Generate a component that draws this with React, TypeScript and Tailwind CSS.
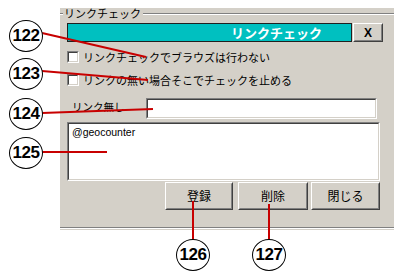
import React from "react";

const jp = { fontFamily: '"MS UI Gothic", "Noto Sans CJK JP", sans-serif' };

function Sunken({ className, children }: { className: string; children?: React.ReactNode }) {
  return (
    <div className={`border border-t-[#808080] border-l-[#808080] border-b-white border-r-white ${className}`}>
      <div className="w-full h-full border border-t-[#404040] border-l-[#404040] border-b-[#d4d0c8] border-r-[#d4d0c8] bg-white">
        {children}
      </div>
    </div>
  );
}

function Raised({ className, children }: { className: string; children?: React.ReactNode }) {
  return (
    <div className={`border border-t-white border-l-white border-b-[#404040] border-r-[#404040] ${className}`}>
      <div className="w-full h-full border border-t-[#d4d0c8] border-l-[#d4d0c8] border-b-[#808080] border-r-[#808080] bg-[#d4d0c8] flex items-center justify-center">
        {children}
      </div>
    </div>
  );
}

function Callout({ n, className }: { n: string; className: string }) {
  return (
    <div
      className={`absolute w-[34px] h-[32px] rounded-[50%] border border-black bg-white flex items-center justify-center text-[17px] font-bold tracking-[-0.5px] text-black ${className}`}
      style={{ fontFamily: '"Liberation Sans", Arial, sans-serif' }}
    >
      {n}
    </div>
  );
}

function CheckRow({ label, className }: { label: string; className: string }) {
  return (
    <div className={`flex items-center h-[12px] ${className}`}>
      <Sunken className="w-[12px] h-[12px]" />
      <span className="ml-[4px] text-[11px] leading-none text-black" style={jp}>
        {label}
      </span>
    </div>
  );
}

export default function App() {
  return (
    <div className="relative w-[401px] h-[275px] bg-white overflow-hidden">
      <div className="ml-[60px] pt-[8px]">
        <div className="w-[334px] h-[222px] bg-[#d4d0c8] flex flex-col pl-[7px]">
          <div className="-ml-[7px] h-[11px] flex items-center">
            <div className="w-[3px] border-t border-t-[#808080] border-b border-b-white" />
            <span className="ml-[1px] text-[11px] leading-none text-black" style={jp}>
              リンクチェック
            </span>
            <div className="flex-1 ml-[2px] border-t border-t-[#808080] border-b border-b-white" />
          </div>
          <div className="mt-[4px] flex h-[19px]">
            <div className="w-[285px] h-[19px] border border-[#202020] bg-[#00c0c0] flex items-center justify-end pr-[29px]">
              <span className="text-[13px] font-bold leading-none text-white" style={jp}>
                リンクチェック
              </span>
            </div>
            <Raised className="ml-[1px] w-[30px] h-[19px]">
              <span className="text-[12px] font-bold leading-none text-black" style={{ fontFamily: '"Liberation Sans", Arial, sans-serif' }}>
                X
              </span>
            </Raised>
          </div>
          <CheckRow className="mt-[9px]" label="リンクチェックでブラウズは行わない" />
          <CheckRow className="mt-[11px]" label="リンクの無い場合そこでチェックを止める" />
          <div className="mt-[12px] flex h-[21px]">
            <div className="w-[79px] pl-[5px] pt-[4px] text-[10.5px] leading-none text-black" style={jp}>
              リンク無し
            </div>
            <Sunken className="w-[231px] h-[21px]" />
          </div>
          <Sunken className="mt-[3px] w-[313px] h-[59px]">
            <div className="pl-[3px] pt-[3px] text-[10.5px] leading-none text-black" style={{ fontFamily: '"Liberation Sans", Arial, sans-serif' }}>
              @geocounter
            </div>
          </Sunken>
          <div className="mt-[1px] ml-[98px] flex h-[28px]">
            <Raised className="w-[68px] h-[28px]">
              <span className="text-[12px] leading-none text-black" style={jp}>登録</span>
            </Raised>
            <Raised className="ml-[5px] w-[70px] h-[28px]">
              <span className="text-[12px] leading-none text-black" style={jp}>削除</span>
            </Raised>
            <Raised className="ml-[3px] w-[69px] h-[28px]">
              <span className="text-[12px] leading-none text-black" style={jp}>閉じる</span>
            </Raised>
          </div>
          <div className="mt-[17px] -ml-[7px] border-t border-t-[#808080] border-b border-b-white" />
        </div>
      </div>

      <svg className="absolute left-0 top-0" width="401" height="275" viewBox="0 0 401 275">
        <g stroke="#c80000" strokeWidth="2" fill="none">
          <line x1="42" y1="33" x2="146" y2="57" />
          <line x1="42" y1="71" x2="148" y2="80" />
          <line x1="42" y1="113" x2="153" y2="109" />
          <line x1="42" y1="152" x2="107" y2="152" />
          <line x1="193" y1="201" x2="193" y2="239" />
          <line x1="269" y1="204" x2="269" y2="239" />
        </g>
      </svg>

      <Callout n="122" className="left-[9px] top-[20px]" />
      <Callout n="123" className="left-[9px] top-[58px]" />
      <Callout n="124" className="left-[9px] top-[98px]" />
      <Callout n="125" className="left-[9px] top-[137px]" />
      <Callout n="126" className="left-[176px] top-[239px]" />
      <Callout n="127" className="left-[252px] top-[239px]" />
    </div>
  );
}
